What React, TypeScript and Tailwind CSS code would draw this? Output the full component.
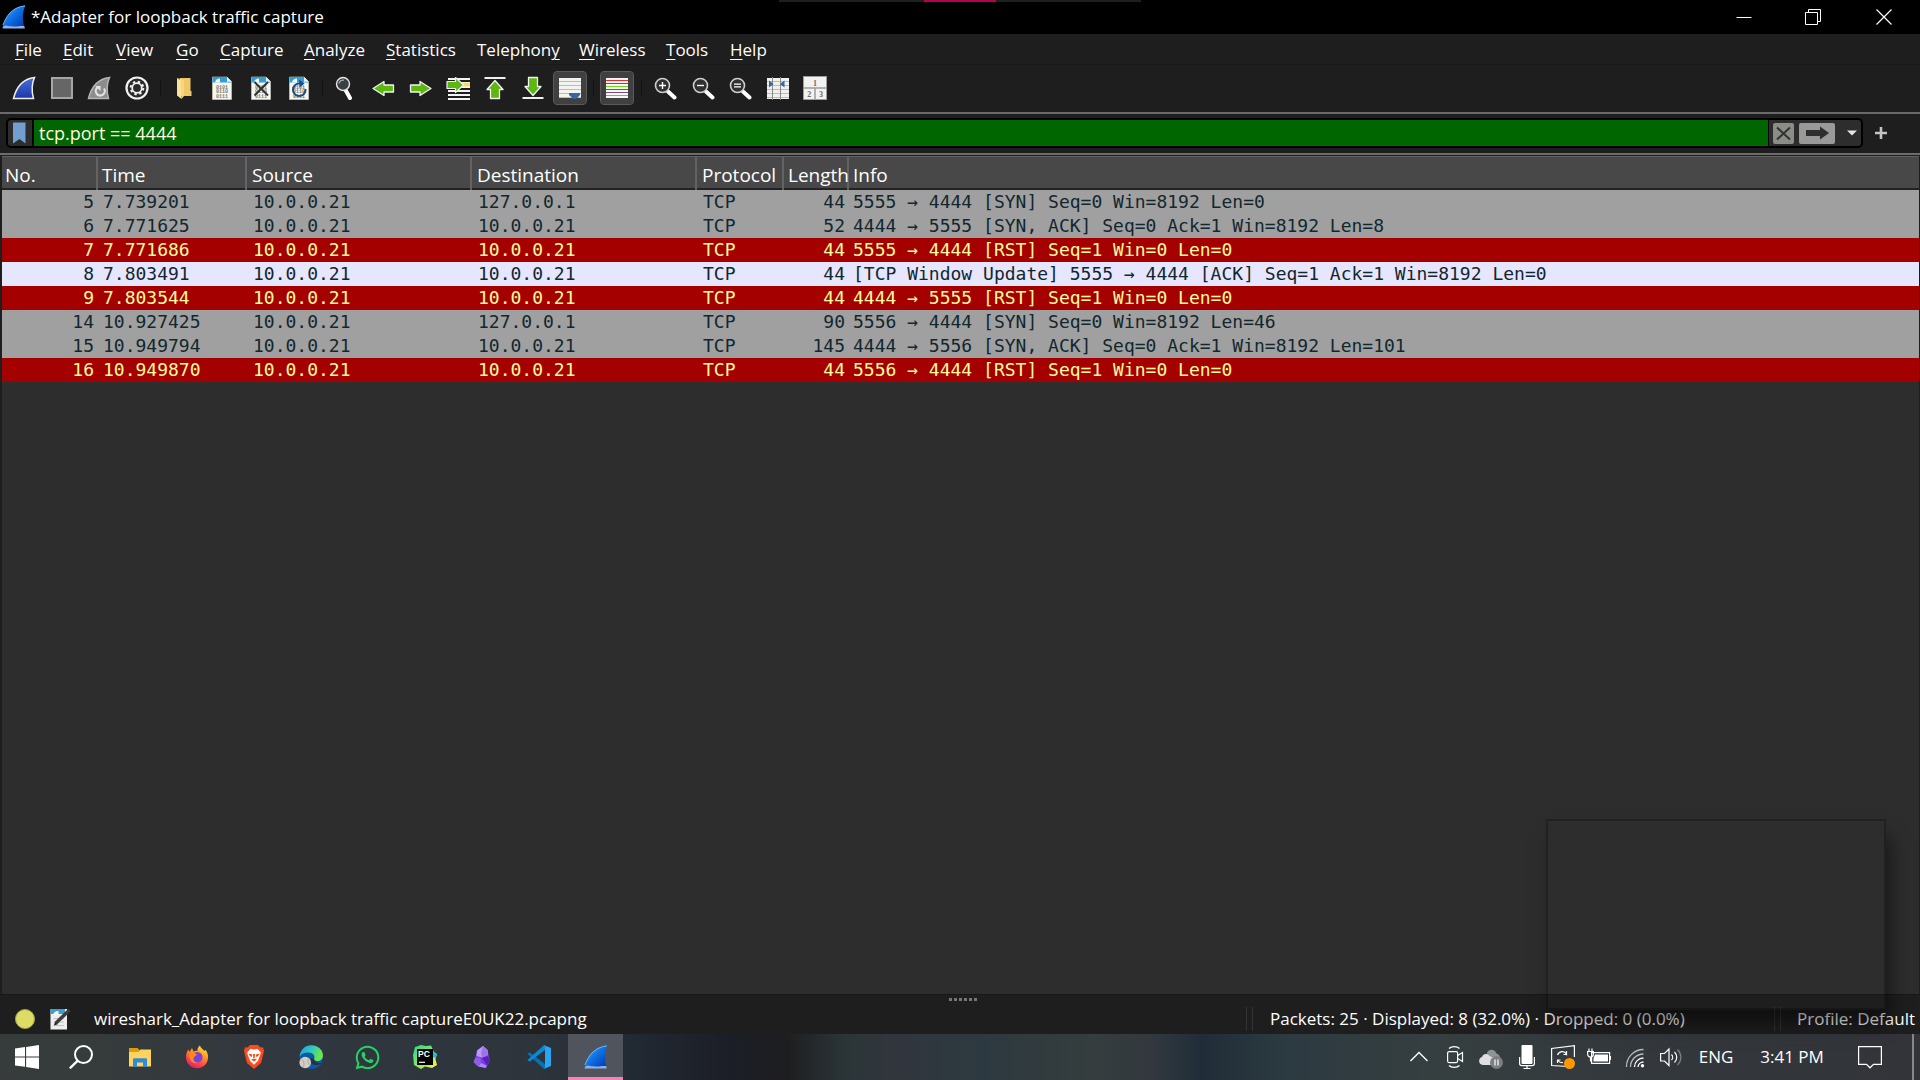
import React from "react";
import { FaWhatsapp } from "react-icons/fa";

type IconProps = { className?: string };

const Svg = ({
  size = 24,
  box = 24,
  className = "",
  children,
}: {
  size?: number;
  box?: number;
  className?: string;
  children: React.ReactNode;
}) => (
  <svg width={size} height={size} viewBox={`0 0 ${box} ${box}`} fill="none" className={`shrink-0 ${className}`} aria-hidden="true">
    {children}
  </svg>
);

/* ---------- toolbar icons ---------- */

const finPath = "M1.5 22.5C4 12.500 9 3 22.500 1.500C19.500 8 19.500 15 21.500 22.500Z";

const AppFin = ({ className }: IconProps) => (
  <Svg className={className}>
    <defs>
      <linearGradient id="fin" x1="0" y1="0" x2="1" y2="1">
        <stop offset="0" stopColor="#5ab4f5" />
        <stop offset="0.45" stopColor="#0f74e8" />
        <stop offset="1" stopColor="#0430a8" />
      </linearGradient>
    </defs>
    <path d="M0.500 23C3 13 9 2 23.500 0.500C20 7 20.500 15 22.500 23Z" fill="url(#fin)" />
    <path d="M0.500 23.500C1 21.500 2 20.500 4 20.500C7 21.500 9 21 12 21.500C15 22 18 20.500 22.300 21L22.800 23.500Z" fill="#8fb2e6" />
    <path d="M1 20C4 12 9 2.500 23 0.800" stroke="#7cc0f2" strokeWidth="0.900" />
  </Svg>
);

const StartIcon = () => (
  <Svg>
    <defs>
      <linearGradient id="start" x1="0" y1="0" x2="0" y2="1">
        <stop offset="0" stopColor="#4a6fd8" />
        <stop offset="1" stopColor="#1b37a8" />
      </linearGradient>
    </defs>
    <path d={finPath} fill="url(#start)" stroke="#efefef" strokeWidth="1.500" />
  </Svg>
);

const StopIcon = () => (
  <Svg>
    <rect x="2" y="2" width="20" height="20" fill="#666" stroke="#a6a6a6" strokeWidth="2" />
  </Svg>
);

const RestartIcon = () => (
  <Svg>
    <path d={finPath} fill="#8c8c8c" stroke="#b4b4b4" strokeWidth="1.500" />
    <path d="M10.500 11.500A4.500 4.500 0 1 0 17 12.500" stroke="#e2e2e2" strokeWidth="2.200" />
    <path d="M8 10H13.500V15Z" fill="#e2e2e2" />
  </Svg>
);

const OptionsIcon = () => (
  <Svg>
    <circle cx="12" cy="12" r="10.500" fill="#2a2a2a" stroke="#f2f2f2" strokeWidth="2.200" />
    <circle cx="12" cy="12" r="4.800" stroke="#f2f2f2" strokeWidth="1.800" />
    <circle cx="12" cy="12" r="6.300" stroke="#f2f2f2" strokeWidth="2" strokeDasharray="2.400 2.548" />
  </Svg>
);

const FolderIcon = () => (
  <Svg>
    <path d="M8 2H18.500V15L19.500 15V20H8Z" fill="#f0c868" />
    <path d="M5 2L9.500 5V23L5 19.500Z" fill="#fbe29a" />
    <path d="M9.500 5V23L12 20V4L5 2Z" fill="#f7d67e" />
  </Svg>
);

const Doc = ({ children }: { children?: React.ReactNode }) => (
  <Svg>
    <path d="M2.500 1H17L21.500 5.500V23.500H2.500Z" fill="#f7f7ee" stroke="#d4d4c8" strokeWidth="0.600" />
    <path d="M2.500 1H17V5.500H21.500V6.500H2.500Z" fill="#2f9fd8" />
    <path d="M17 1L21.500 5.500H17Z" fill="#e8f4fa" />
    <path d="M5 6.500C5.500 4 7.500 2.500 10 2.500V6.500Z" fill="#fff" />
    <g fill="#7a7a72" fontFamily="Liberation Mono, monospace" fontSize="5" fontWeight="bold">
      <text x="6" y="12.500">0101</text>
      <text x="6" y="17">0110</text>
      <text x="6" y="21.500">0111</text>
    </g>
    {children}
  </Svg>
);

const FindIcon = () => (
  <Svg>
    <path d="M11.500 14L16 22" stroke="#fff" strokeWidth="4" strokeLinecap="round" />
    <circle cx="9" cy="8" r="6.500" fill="#3a3f42" stroke="#e8e8e8" strokeWidth="1.400" />
    <path d="M5 7.500A4 4 0 0 1 10 4.200" stroke="#a9b0b4" strokeWidth="1.300" />
  </Svg>
);

const arrow = "M13 5.500V9H22.500V16H13V19.500L2 12.500Z";
const ArrowIcon = ({ turn }: { turn: number }) => (
  <Svg>
    <path d={arrow} fill="#5cb811" stroke="#f2f2f2" strokeWidth="1.300" strokeLinejoin="round" transform={`rotate(${turn} 12 12.500)`} />
  </Svg>
);

const GotoIcon = () => (
  <Svg>
    <path d="M2 3H24M2 7H24M2 11H24M2 15H24M2 19H24M2 23H24" stroke="#f4f4f4" strokeWidth="2" />
    <path d="M14 8.500H24" stroke="#f6e04a" strokeWidth="3.500" />
    <path d="M1 5.500H9.500V1.500L17.500 9L9.500 16.500V12.500H1Z" fill="#5cb811" stroke="#f2f2f2" strokeWidth="1.200" strokeLinejoin="round" />
  </Svg>
);

const EdgeArrowIcon = ({ down = false }: { down?: boolean }) => (
  <Svg>
    <g transform={down ? "rotate(180 12 12)" : undefined}>
      <path d="M1.500 2H22.500" stroke="#f0f0f0" strokeWidth="2" />
      <path d="M12 4.500L20 13.500H16.500V22.500H7.500V13.500H4Z" fill="#5cb811" stroke="#f2f2f2" strokeWidth="1.300" strokeLinejoin="round" />
    </g>
  </Svg>
);

const AutoScrollIcon = () => (
  <Svg>
    <rect x="1" y="2" width="22" height="20" fill="#f3f3ef" />
    <path d="M1 5.500H23M1 9.500H23M1 13.500H23M1 17.500H23M1 21.500H23" stroke="#babdb6" strokeWidth="1" />
    <path d="M11 17H22V19L18 23H15.500L11 19Z" fill="#3465a4" />
  </Svg>
);

const ColorizeIcon = () => (
  <Svg>
    <rect x="1" y="2" width="22" height="20" fill="#f6f6f4" />
    <path d="M1 4.500H23" stroke="#ef2929" strokeWidth="1" />
    <path d="M1 7.500H23M1 13.500H23" stroke="#3465a4" strokeWidth="1" />
    <path d="M1 10.500H23" stroke="#73d216" strokeWidth="1" />
    <path d="M1 16.500H23" stroke="#75507b" strokeWidth="1" />
    <path d="M1 19.500H23" stroke="#c4a000" strokeWidth="1" />
  </Svg>
);

const ZoomIcon = ({ sign }: { sign: "plus" | "minus" | "equal" }) => (
  <Svg>
    <path d="M15 15.500L21.500 21.500" stroke="#fff" strokeWidth="4" strokeLinecap="round" />
    <circle cx="9.500" cy="9.500" r="7" fill="#303030" stroke="#cfcfcf" strokeWidth="1.600" />
    {sign === "plus" && <path d="M9.500 6V13M6 9.500H13" stroke="#fff" strokeWidth="1.400" />}
    {sign === "minus" && <path d="M6 9.500H13" stroke="#fff" strokeWidth="1.400" />}
    {sign === "equal" && <path d="M6 8.200H13M6 10.800H13" stroke="#fff" strokeWidth="1.300" />}
  </Svg>
);

const ColumnsIcon = () => (
  <Svg>
    <rect x="1" y="2" width="22" height="21" fill="#f0f0ec" />
    <path d="M1 5.500H23M1 9.500H23M1 13.500H23M1 17.500H23M1 21.500H23" stroke="#babdb6" strokeWidth="1" />
    <path d="M6.500 1V24M14.500 1V24" stroke="#888a85" strokeWidth="1" />
    <path d="M3 4.500V11.500L7.500 8Z" fill="#3465a4" />
    <path d="M18.500 4.500V11.500L14 8Z" fill="#3465a4" />
  </Svg>
);

const LayoutIcon = () => (
  <Svg>
    <rect x="0.500" y="0.500" width="23" height="23" fill="#f2f2f0" stroke="#9c9c98" />
    <path d="M0.500 12H23.500M12 12V23.500" stroke="#9c9c98" strokeWidth="1.500" />
    <g fill="#6c6c6c" fontFamily="Liberation Serif, serif" fontSize="8" fontWeight="bold" textAnchor="middle">
      <text x="12" y="9.500">1</text>
      <text x="6.300" y="20.500">2</text>
      <text x="18" y="20.500">3</text>
    </g>
  </Svg>
);

/* ---------- toolbar ---------- */

type Tool = { label: string; icon: React.ReactNode; active?: boolean };

const toolGroups: { width: string; tools: Tool[] }[] = [
  {
    width: "w-[145px]",
    tools: [
      { label: "Start capture", icon: <StartIcon /> },
      { label: "Stop capture", icon: <StopIcon /> },
      { label: "Restart capture", icon: <RestartIcon /> },
      { label: "Capture options", icon: <OptionsIcon /> },
    ],
  },
  {
    width: "w-[147px]",
    tools: [
      { label: "Open file", icon: <FolderIcon /> },
      { label: "Save file", icon: <Doc /> },
      {
        label: "Close file",
        icon: (
          <Doc>
            <path d="M5.500 6L19 19.500M19 6L5.500 19.500" stroke="#2e3436" strokeWidth="2" />
          </Doc>
        ),
      },
      {
        label: "Reload file",
        icon: (
          <Doc>
            <path d="M18.500 13A6.300 6.300 0 1 1 13 7.500" stroke="#204a87" strokeWidth="2" />
            <path d="M12 3.500L17.500 7.500L12.500 11.500Z" fill="#204a87" />
          </Doc>
        ),
      },
    ],
  },
  {
    width: "w-[256px]",
    tools: [
      { label: "Find packet", icon: <FindIcon /> },
      { label: "Previous packet", icon: <ArrowIcon turn={0} /> },
      { label: "Next packet", icon: <ArrowIcon turn={180} /> },
      { label: "Go to packet", icon: <GotoIcon /> },
      { label: "First packet", icon: <EdgeArrowIcon /> },
      { label: "Last packet", icon: <EdgeArrowIcon down /> },
      { label: "Auto scroll", icon: <AutoScrollIcon />, active: true },
    ],
  },
  { width: "w-[33px]", tools: [{ label: "Colorize packets", icon: <ColorizeIcon />, active: true }] },
  {
    width: "w-[182px]",
    tools: [
      { label: "Zoom in", icon: <ZoomIcon sign="plus" /> },
      { label: "Zoom out", icon: <ZoomIcon sign="minus" /> },
      { label: "Normal size", icon: <ZoomIcon sign="equal" /> },
      { label: "Resize columns", icon: <ColumnsIcon /> },
      { label: "Reset layout", icon: <LayoutIcon /> },
    ],
  },
];

const Toolbar = () => (
  <div className="flex h-12 items-center border-t border-[#191919] pb-px pl-2" role="toolbar" aria-label="Main toolbar">
    {toolGroups.map((group, i) => (
      <React.Fragment key={group.tools[0].label}>
        {i > 0 && <span className="mx-[7px] h-4 w-px bg-[#131313]" />}
        <div className={`flex justify-between ${group.width}`}>
          {group.tools.map((tool) => (
            <button
              key={tool.label}
              aria-label={tool.label}
              aria-pressed={tool.active}
              className={`flex h-8 w-8 items-center justify-center rounded-[3px] ${
                tool.active ? "bg-[#404040] outline-1 outline-[#5a5a5a]" : ""
              }`}
            >
              {tool.icon}
            </button>
          ))}
        </div>
      </React.Fragment>
    ))}
  </div>
);

/* ---------- title and menu ---------- */

const TitleBar = () => (
  <header className="relative flex h-[34px] shrink-0 items-center bg-black pl-[2px] text-white">
    <AppFin />
    <h1 className="ml-[5px] flex-1 text-[17px] leading-6">*Adapter for loopback traffic capture</h1>
    <button aria-label="Minimize" className="flex h-full w-[69px] items-center justify-center">
      <Svg size={16} box={16}>
        <path d="M0.500 8.500H15.500" stroke="#fff" />
      </Svg>
    </button>
    <button aria-label="Restore" className="flex h-full w-[69px] items-center justify-center">
      <Svg size={16} box={16}>
        <path d="M0.500 3.500H12.500V15.500H0.500ZM3.500 3.500V0.500H15.500V12.500H12.500" stroke="#fff" />
      </Svg>
    </button>
    <button aria-label="Close" className="flex h-full w-[73px] items-center justify-center">
      <Svg size={16} box={16}>
        <path d="M0.500 0.500L15.500 15.500M15.500 0.500L0.500 15.500" stroke="#fff" strokeWidth="1.200" />
      </Svg>
    </button>
    <div className="absolute top-0 left-[779px] flex h-[2px] w-[362px] justify-center bg-[#1f1f1f]">
      <span className="w-[72px] bg-[#b8004f]" />
    </div>
  </header>
);

const menus: [string, number, string][] = [
  ["File", 0, "w-12"],
  ["Edit", 0, "w-[53px]"],
  ["View", 0, "w-[60px]"],
  ["Go", 0, "w-[44px]"],
  ["Capture", 0, "w-[84px]"],
  ["Analyze", 0, "w-[82px]"],
  ["Statistics", 0, "w-[91px]"],
  ["Telephony", 8, "w-[102px]"],
  ["Wireless", 0, "w-[87px]"],
  ["Tools", 0, "w-[64px]"],
  ["Help", 0, "w-[60px]"],
];

const MenuBar = () => (
  <nav className="flex h-[30px] items-center pt-[2px] pl-[15px] text-[17px] leading-6" aria-label="Menu">
    {menus.map(([label, key, width]) => (
      <button key={label} className={`text-left whitespace-nowrap ${width}`}>
        {label.slice(0, key)}
        <span className="underline decoration-1 underline-offset-[3px]">{label[key]}</span>
        {label.slice(key + 1)}
      </button>
    ))}
  </nav>
);

const FilterBar = () => (
  <form className="flex h-[41px] items-center border-t-2 border-[#6a6a6a] pb-px pl-[6px]" onSubmit={(e) => e.preventDefault()}>
    <div className="flex h-[30px] flex-1 items-stretch overflow-hidden rounded-[5px] border-2 border-black bg-[#2d2d2d]">
      <button type="button" aria-label="Filter bookmarks" className="flex w-[26px] items-center justify-center border-r-2 border-black">
        <Svg size={22} box={22}>
          <path d="M4 0.500H16.500V21.500L10.500 17L4 21.500Z" fill="#729fcf" />
        </Svg>
      </button>
      <input
        aria-label="Display filter"
        defaultValue="tcp.port == 4444"
        className="min-w-0 flex-1 bg-[#006600] px-[5px] text-[18px] leading-6 text-[#fffbe0] outline-none"
      />
      <div className="flex items-center border-l border-black pr-[3px] pl-1">
        <button type="button" aria-label="Clear filter" className="flex h-[21px] w-[21px] items-center justify-center rounded-[2px] bg-[#8b8d87]">
          <Svg size={17} box={17}>
            <path d="M2 2.500L15 14.500M15 2.500L2 14.500" stroke="#333" strokeWidth="2" />
          </Svg>
        </button>
        <button type="submit" aria-label="Apply filter" className="ml-[5px] flex h-[21px] w-9 items-center justify-center rounded-[2px] bg-[#999]">
          <Svg size={26} box={26}>
            <path d="M2 10H16V6.500L25 13L16 19.500V16H2Z" fill="#2e2e2e" />
          </Svg>
        </button>
        <button type="button" aria-label="Recent filters" className="ml-[11px] flex h-5 w-[12px] items-center justify-center">
          <Svg size={12} box={12}>
            <path d="M1 3.500H11L6 8.500Z" fill="#e6e6e0" />
          </Svg>
        </button>
      </div>
    </div>
    <button type="button" aria-label="Add filter button" className="mr-[31px] ml-[10px] flex h-6 w-4 items-center justify-center">
      <Svg size={12} box={12}>
        <path d="M6 0V12M0 6H12" stroke="#c4c4c4" strokeWidth="2.600" />
      </Svg>
    </button>
  </form>
);

/* ---------- packet list ---------- */

type Kind = "syn" | "rst" | "tcp";
type Packet = [string, string, string, string, string, string, string, Kind];

const packets: Packet[] = [
  ["5", "7.739201", "10.0.0.21", "127.0.0.1", "TCP", "44", "5555 → 4444 [SYN] Seq=0 Win=8192 Len=0", "syn"],
  ["6", "7.771625", "10.0.0.21", "10.0.0.21", "TCP", "52", "4444 → 5555 [SYN, ACK] Seq=0 Ack=1 Win=8192 Len=8", "syn"],
  ["7", "7.771686", "10.0.0.21", "10.0.0.21", "TCP", "44", "5555 → 4444 [RST] Seq=1 Win=0 Len=0", "rst"],
  ["8", "7.803491", "10.0.0.21", "10.0.0.21", "TCP", "44", "[TCP Window Update] 5555 → 4444 [ACK] Seq=1 Ack=1 Win=8192 Len=0", "tcp"],
  ["9", "7.803544", "10.0.0.21", "10.0.0.21", "TCP", "44", "4444 → 5555 [RST] Seq=1 Win=0 Len=0", "rst"],
  ["14", "10.927425", "10.0.0.21", "127.0.0.1", "TCP", "90", "5556 → 4444 [SYN] Seq=0 Win=8192 Len=46", "syn"],
  ["15", "10.949794", "10.0.0.21", "10.0.0.21", "TCP", "145", "4444 → 5556 [SYN, ACK] Seq=0 Ack=1 Win=8192 Len=101", "syn"],
  ["16", "10.949870", "10.0.0.21", "10.0.0.21", "TCP", "44", "5556 → 4444 [RST] Seq=1 Win=0 Len=0", "rst"],
];

const rowStyle: Record<Kind, string> = {
  syn: "bg-[#a0a0a0] text-[#12272e]",
  rst: "bg-[#a40000] text-[#fffc9c]",
  tcp: "bg-[#e7e6ff] text-[#12272e]",
};

const columns: [string, string][] = [
  ["No.", "w-[95px] px-[3px]"],
  ["Time", "w-[149px] px-1"],
  ["Source", "w-[225px] px-[5px]"],
  ["Destination", "w-[225px] px-[5px]"],
  ["Protocol", "w-[87px] px-[5px]"],
  ["Length", "w-[65px] px-1"],
  ["Info", "px-1"],
];

const PacketTable = () => (
  <table className="w-full table-fixed border-collapse">
    <thead>
      <tr className="h-8 border-t border-b-2 border-t-[#636363] border-b-[#222] bg-[#484848]">
        {columns.map(([name, style], i) => (
          <th
            key={name}
            scope="col"
            className={`h-8 pt-[6px] text-left text-[19px] leading-6 font-normal whitespace-nowrap text-white ${style} ${
              i < columns.length - 1 ? "border-r-2 border-[#636363]" : ""
            }`}
          >
            {name}
          </th>
        ))}
      </tr>
    </thead>
    <tbody className="font-['DejaVu_Sans_Mono',monospace] text-[18px] leading-6">
      {packets.map(([no, time, src, dst, proto, len, info, kind]) => (
        <tr key={no} className={`h-6 ${rowStyle[kind]}`}>
          <td className="p-0 pr-[3px] text-right">{no}</td>
          <td className="p-0 pl-[6px]">{time}</td>
          <td className="p-0 pl-[7px]">{src}</td>
          <td className="p-0 pl-[7px]">{dst}</td>
          <td className="p-0 pl-[7px]">{proto}</td>
          <td className="p-0 pr-[3px] text-right">{len}</td>
          <td className="p-0 pl-[5px] whitespace-nowrap">{info}</td>
        </tr>
      ))}
    </tbody>
  </table>
);

/* ---------- status bar ---------- */

const Divider = () => (
  <span className="flex gap-[5px]">
    <span className="h-6 w-px bg-[#333]" />
    <span className="h-6 w-px bg-[#333]" />
  </span>
);

const StatusBar = () => (
  <footer className="flex h-[40px] shrink-0 flex-col border-t border-[#181818] bg-[#1e1e1e] text-[17px] leading-6 text-white">
    <div className="mb-[3px] flex h-2 items-center justify-center gap-[2px] pl-[5px]">
      {[0, 1, 2, 3, 4, 5].map((n) => (
        <span key={n} className="size-[3px] bg-[#777]" />
      ))}
    </div>
    <div className="flex items-center">
      <button aria-label="Expert information" className="ml-[15px] size-[20px] rounded-full border border-[#a5a54a] bg-[#dcdc66]" />
      <button aria-label="Capture comments" className="ml-[14px]">
        <Svg size={22} box={22}>
          <path d="M1.500 1H18V21.500H1.500Z" fill="#eee" />
          <path d="M1.500 1H16V6H1.500Z" fill="#3b9fd6" />
          <path d="M4 6.500C5 4 7 3 9.500 3V6.500Z" fill="#fff" />
          <path d="M4.500 10.500H15M4.500 14H15M4.500 17.500H15" stroke="#c2c2c2" />
          <path d="M7 15L20.500 2" stroke="#3c3c3c" strokeWidth="3.500" />
          <path d="M5 17.500L6 13.800L8.800 16.200Z" fill="#222" />
        </Svg>
      </button>
      <span className="ml-[23px] flex-1 pt-px">wireshark_Adapter for loopback traffic captureE0UK22.pcapng</span>
      <Divider />
      <span className="ml-[17px] w-[504px] pt-px whitespace-nowrap">Packets: 25 · Displayed: 8 (32.0%) · Dropped: 0 (0.0%)</span>
      <Divider />
      <button className="mr-[5px] ml-4 w-[118px] pt-px text-right whitespace-nowrap">Profile: Default</button>
    </div>
  </footer>
);

/* ---------- taskbar ---------- */

const Windows = () => (
  <Svg>
    <path d="M0 3.500L10 2.100V11.400H0ZM11.100 1.900L24 0V11.400H11.100ZM0 12.500H10V21.800L0 20.400ZM11.100 12.500H24V24L11.100 22.100Z" fill="#fff" />
  </Svg>
);

const Search = () => (
  <Svg>
    <circle cx="14.500" cy="9.500" r="8.500" stroke="#fff" strokeWidth="2" />
    <path d="M8.500 15.800L0.800 23.300" stroke="#fff" strokeWidth="2.400" />
  </Svg>
);

const Explorer = () => (
  <Svg>
    <path d="M1 3H9.500L12 5.500V8H1Z" fill="#e09c10" />
    <path d="M1 7H10.500L12.500 4.500H23V21.500H1Z" fill="#ffd45e" />
    <path d="M5 22V14.500C5 13.700 5.500 13.200 6.300 13.200H17.700C18.500 13.200 19 13.700 19 14.500V22H15V17.500H9V22Z" fill="#2f8ad8" />
  </Svg>
);

const Firefox = () => (
  <Svg>
    <defs>
      <linearGradient id="ff" x1="0.800" y1="0" x2="0.300" y2="1">
        <stop offset="0" stopColor="#ffe83c" />
        <stop offset="0.400" stopColor="#ff9322" />
        <stop offset="0.750" stopColor="#ff3f4a" />
        <stop offset="1" stopColor="#e0187c" />
      </linearGradient>
    </defs>
    <path
      d="M1 12C1 8.500 2 6.500 3.500 4.500L4.500 7L7 3L8.500 6.500C9.500 6 11 5.500 12.500 6C12 3.500 13.500 1.500 15 0.500C15.500 3 18 4 19.500 6L20.500 4.800C22.500 7.500 23.300 10 23 13C22.500 19 18 23.300 12 23.300C6 23.300 1 18.500 1 12Z"
      fill="url(#ff)"
    />
    <circle cx="12.300" cy="12.300" r="5.200" fill="#7a41dc" />
    <path d="M4.500 8.500C7 7 9.500 7.500 12 9.500C10.500 11.500 9 11 8.500 13.500C8.200 16 10 17.500 12.500 17.800C8 19.500 3.500 15.500 4.500 8.500Z" fill="#ff8a22" />
  </Svg>
);

const Brave = () => (
  <Svg>
    <path d="M8 0H16L18.500 2.500L21 2.300L22 6L21.500 8L19 18L12 24L5 18L2.500 8L2 6L3 2.300L5.500 2.500Z" fill="#fb4a1c" />
    <path
      d="M8.500 3.800L12 4.600L15.500 3.800L18.800 7.500L18.300 9.800L16.800 13.500L16 15.800L12 19.800L8 15.800L7.200 13.500L5.700 9.800L5.200 7.500Z"
      fill="#fff"
    />
    <path d="M6.500 8.500L10.300 9.600L9.800 12L7.800 11ZM17.500 8.500L13.700 9.600L14.200 12L16.200 11ZM11 9H13L12.700 13H11.300ZM9 14.500L12 13.600L15 14.500L12 16.500Z" fill="#fb4a1c" />
  </Svg>
);

const Edge = () => (
  <Svg>
    <defs>
      <linearGradient id="edge" x1="0" y1="0" x2="1" y2="0.400">
        <stop offset="0" stopColor="#1f9be0" />
        <stop offset="0.500" stopColor="#2fc6c4" />
        <stop offset="1" stopColor="#6ae84a" />
      </linearGradient>
    </defs>
    <path d="M0.500 11.500A11.700 11.700 0 1 1 23 17.500C21 21.500 16.500 24 12 24C5.500 24 0.500 18.500 0.500 11.500Z" fill="#0c59a4" />
    <path d="M0.500 12C1 5 6 0.300 12.200 0.300C19 0.300 24 5 24 10.500C24 14 21.500 16 18.500 16C16 16 14.500 15 15.200 13.500C16.500 11 14 7.500 9.500 7.500C5 7.500 1.500 9.500 0.500 12Z" fill="url(#edge)" />
    <path d="M11.500 13C10.500 17.500 13.500 20 16.500 20C19 20 21.500 19.500 22.500 18C18.500 18.500 15 17 15 13.500Z" fill="#2a3440" />
    <circle cx="6.200" cy="17.500" r="5.800" fill="#d5cdc4" />
    <path d="M3 14.500C5 16.500 5.500 19 4.500 22M9.500 14C8.500 16.500 9 18.500 10.500 20" stroke="#a89a8c" strokeWidth="0.800" />
  </Svg>
);

const PyCharm = () => (
  <Svg>
    <defs>
      <linearGradient id="py" x1="0" y1="0" x2="1" y2="1">
        <stop offset="0" stopColor="#21d789" />
        <stop offset="0.500" stopColor="#7fe86a" />
        <stop offset="1" stopColor="#fcf84a" />
      </linearGradient>
    </defs>
    <path d="M2 2L8 0L13 1L18 0.500L21 7L24 9L22.500 14L24 20L19 23L12 21.500L8 24L1 20L0 10Z" fill="url(#py)" />
    <path d="M20 7L24 9L22.500 13L20 12Z" fill="#07c3f2" />
    <rect x="4" y="4" width="16" height="16" fill="#000" />
    <text x="5" y="12" fill="#fff" fontFamily="Liberation Sans, sans-serif" fontWeight="bold" fontSize="8.500">
      PC
    </text>
    <path d="M6 17.300H12" stroke="#fff" strokeWidth="1.200" />
  </Svg>
);

const Obsidian = () => (
  <Svg>
    <path d="M13 1L7 5.500L5.500 12L3.500 17L8 21.500L16 23L20 16L17.500 5Z" fill="#7c3aed" />
    <path d="M13 1L7 5.500L6.500 11L12 12.500L18 10L17.500 5Z" fill="#b79cf5" />
    <path d="M13 1L11 8L12 12.500L18 10L17.500 5Z" fill="#9a75ea" />
    <path d="M5.500 12.500L3.500 17L8 21.500L11 17.500L10.500 13Z" fill="#8b5fe0" />
    <path d="M12 13L18 11L20 16L17 20.500Z" fill="#5b21b6" />
    <path d="M11 18L8.500 21.500L16 23L16.500 20.500Z" fill="#a78bfa" />
  </Svg>
);

const VsCode = () => (
  <Svg>
    <path d="M0.500 9L2.500 7.300L18 19V24L16.500 23.500Z" fill="#0072b8" />
    <path d="M0.500 15L2.500 16.700L18 5V0L16.500 0.500Z" fill="#0a8ad6" />
    <path d="M17 0.200L24 3V21L17 23.800C17.800 23.200 18 22.500 18 21.500V2.500C18 1.500 17.800 0.800 17 0.200Z" fill="#2aa5f2" />
  </Svg>
);

const apps: { label: string; icon: React.ReactNode; active?: boolean }[] = [
  { label: "File Explorer", icon: <Explorer /> },
  { label: "Firefox", icon: <Firefox /> },
  { label: "Brave", icon: <Brave /> },
  { label: "Microsoft Edge", icon: <Edge /> },
  { label: "WhatsApp", icon: <FaWhatsapp size={27} color="#25d366" /> },
  { label: "PyCharm", icon: <PyCharm /> },
  { label: "Obsidian", icon: <Obsidian /> },
  { label: "Visual Studio Code", icon: <VsCode /> },
  { label: "Wireshark", icon: <AppFin />, active: true },
];

const tray: [string, React.ReactNode][] = [
  ["Show hidden icons", <path d="M3.500 16L12 7.500L20.500 16" stroke="#fff" strokeWidth="1.300" />],
  [
    "Meet now",
    <g stroke="#fff" strokeWidth="1.200">
      <rect x="4.600" y="6.600" width="10" height="11" rx="1.500" />
      <path d="M14.600 10.500L19.500 7.500V16.500L14.600 13.500M6 3.500C8.500 1 14 1 16.500 3.500M6 20.500C8.500 23 14 23 16.500 20.500" />
    </g>,
  ],
  [
    "OneDrive",
    <>
      <path d="M8 8C9.500 3.500 16 3.500 17.500 8.500C20 9 21 11 21 13H9Z" fill="#8e9496" />
      <path d="M4 20C-1 20-1 13 3 12C4 8.500 8.500 8 10.500 11L17 14V20Z" fill="#dedede" />
      <circle cx="17.500" cy="17.500" r="6.500" fill="#7b7f82" />
      <path d="M16 14.500V20.500M19 14.500V20.500" stroke="#fff" strokeWidth="1.200" />
    </>,
  ],
  [
    "Microphone",
    <>
      <rect x="6.500" y="0" width="11" height="19" rx="1" fill="#fff" />
      <path d="M4.600 12V18.500C4.600 20 5.500 20.600 7 20.600H17C18.500 20.600 19.400 20 19.400 18.500V12M12 21V23.500M8.500 23.500H15.500" stroke="#fff" strokeWidth="1.200" />
    </>,
  ],
  [
    "Windows Update",
    <>
      <path d="M18 21.500L0.600 20.500V3.500L23.400 0.700V12" stroke="#fff" strokeWidth="1.200" />
      <path d="M6.500 10A5 5 0 0 1 15.500 9V6M15.500 9.500H12.500M6.500 18V15H9.500M7 15.500A5 5 0 0 0 12 17.500" stroke="#fff" strokeWidth="1.200" />
      <circle cx="18.500" cy="18.500" r="5.500" fill="#ff9800" />
    </>,
  ],
  [
    "Battery",
    <>
      <rect x="4.600" y="7.600" width="18" height="10.800" stroke="#fff" strokeWidth="1.200" />
      <path d="M8 9.500H21V16.500H6.500V13ZM22.500 11H24V15H22.500Z" fill="#fff" />
      <path d="M0.600 6.500H6.400V9C6.400 13 0.600 13 0.600 9ZM2 6.500V3.500M5 6.500V3.500M3.500 12V16.500" stroke="#fff" strokeWidth="1.200" />
    </>,
  ],
  [
    "Wi-Fi",
    <>
      <path d="M3.500 22A17 17 0 0 1 20.500 4.500M7.500 22A13 13 0 0 1 20.500 9" stroke="#b9bcbe" strokeWidth="1.300" />
      <path d="M11.500 22A9 9 0 0 1 20.500 13M15 22A5.500 5.500 0 0 1 20.500 17" stroke="#fff" strokeWidth="1.300" />
      <circle cx="19.500" cy="20.800" r="1.700" fill="#fff" />
    </>,
  ],
  [
    "Volume",
    <>
      <path d="M1.600 8.500H5.500L10 4V20.500L5.500 16H1.600Z" stroke="#fff" strokeWidth="1.200" />
      <path d="M12.500 9.500C14 11 14 13.500 12.500 15M15.500 7C18.500 10 18.500 14.500 15.500 17.500" stroke="#fff" strokeWidth="1.200" />
      <path d="M18.500 4.500C23 9 23 15.500 18.500 20" stroke="#7d8183" strokeWidth="1.200" />
    </>,
  ],
];

const taskButton = "flex h-full items-center justify-center";

const Taskbar = () => (
  <nav
    aria-label="Taskbar"
    className="flex h-[46px] shrink-0 items-center bg-[linear-gradient(to_right,#373b3b_0%,#353b3c_7%,#31373f_15%,#2e343c_28%,#212932_33%,#1c1e27_38%,#1e1e20_41%,#2b3538_44%,#31363d_47%,#2d3940_51%,#353d3e_57%,#32383e_60%,#202d38_62.500%,#2c3a41_67%,#363f40_75%,#33383d_85%,#323439_100%)] text-white"
  >
    <button aria-label="Start" className={`${taskButton} w-[54px]`}>
      <Windows />
    </button>
    <button aria-label="Search" className={`${taskButton} w-[54px]`}>
      <Search />
    </button>
    <div className="ml-1 flex h-full gap-[2px]">
      {apps.map((app) => (
        <button
          key={app.label}
          aria-label={app.label}
          className={`${taskButton} w-[55px] ${app.active ? "border-b-[3px] border-[#ff7eb6] bg-[#50545c] pt-[3px]" : ""}`}
        >
          {app.icon}
        </button>
      ))}
    </div>
    <div className="ml-auto flex h-full items-center">
      {tray.map(([label, shape]) => (
        <button key={label} aria-label={label} className={`${taskButton} w-9`}>
          <Svg>{shape}</Svg>
        </button>
      ))}
      <button className="ml-[3px] w-[48px] text-center text-[17px] leading-6">ENG</button>
      <time className="ml-3 w-[80px] text-center text-[17px] leading-6 whitespace-nowrap">3:41 PM</time>
      <button aria-label="Notifications" className={`${taskButton} ml-[18px] w-10`}>
        <Svg>
          <path d="M0.600 1.600H23.400V19.400H15.500L12 22.800L8.500 19.400H0.600Z" stroke="#fff" strokeWidth="1.200" />
        </Svg>
      </button>
      <button aria-label="Show desktop" className="ml-[22px] h-full w-[8px] border-l-2 border-[#888]" />
    </div>
  </nav>
);

export default function App() {
  return (
    <div className="relative flex min-h-screen flex-col overflow-hidden bg-[#1e1e1e] font-['Open_Sans','Noto_Sans',sans-serif] text-white">
      <TitleBar />
      <MenuBar />
      <Toolbar />
      <FilterBar />
      <div className="h-[3px] shrink-0 border-t-2 border-[#6c6c6c]" />
      <main className="mr-px ml-[2px] flex-1 bg-[#2d2d2d]">
        <PacketTable />
      </main>
      <StatusBar />
      <div className="pointer-events-none absolute right-[34px] bottom-[70px] h-[191px] w-[340px] border-2 border-black/25 shadow-[6px_16px_18px_-2px_rgba(0,0,0,0.5)]" />
      <Taskbar />
    </div>
  );
}
